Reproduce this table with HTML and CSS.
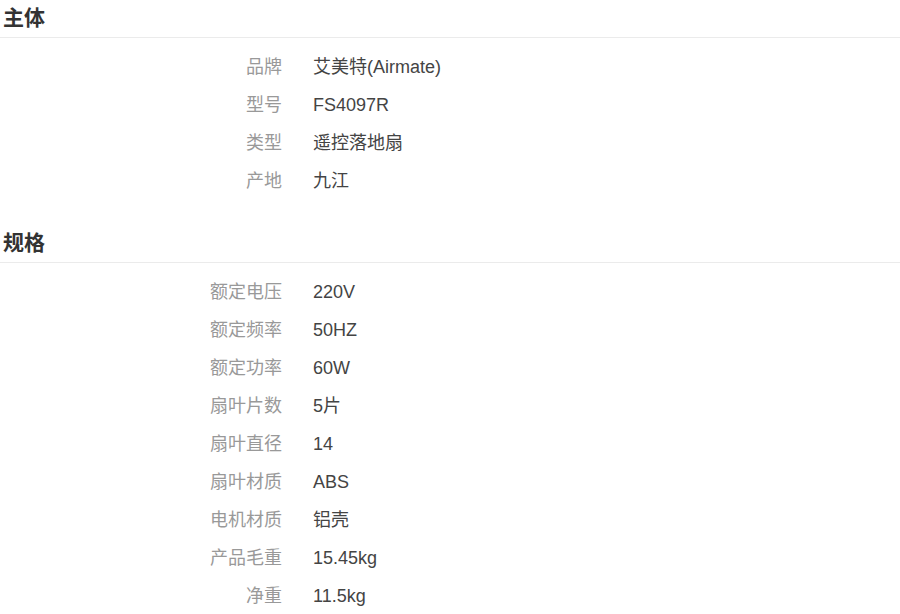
FILE: index.html
```html
<!DOCTYPE html>
<html lang="zh-CN">
<head>
    <meta charset="UTF-8">
    <title>规格参数</title>
    <link rel="stylesheet" href="styles.css">
</head>
<body>
    <section class="spec-group">
        <h2 class="spec-title">主体</h2>
        <dl class="spec-list">
            <dt>品牌</dt><dd>艾美特(Airmate)</dd>
            <dt>型号</dt><dd>FS4097R</dd>
            <dt>类型</dt><dd>遥控落地扇</dd>
            <dt>产地</dt><dd>九江</dd>
        </dl>
    </section>

    <section class="spec-group">
        <h2 class="spec-title">规格</h2>
        <dl class="spec-list">
            <dt>额定电压</dt><dd>220V</dd>
            <dt>额定频率</dt><dd>50HZ</dd>
            <dt>额定功率</dt><dd>60W</dd>
            <dt>扇叶片数</dt><dd>5片</dd>
            <dt>扇叶直径</dt><dd>14</dd>
            <dt>扇叶材质</dt><dd>ABS</dd>
            <dt>电机材质</dt><dd>铝壳</dd>
            <dt>产品毛重</dt><dd>15.45kg</dd>
            <dt>净重</dt><dd>11.5kg</dd>
        </dl>
    </section>
</body>
</html>
```

FILE: styles.css
```css
body {
    margin: 0;
    padding-top: 4px;
    background: #ffffff;
    font-family: "Liberation Sans", "Noto Sans CJK SC", sans-serif;
    color: #333333;
}

.spec-group + .spec-group {
    margin-top: 29px;
}

.spec-title {
    margin: 0;
    padding: 0 0 5px 3px;
    font-size: 21px;
    line-height: 28px;
    font-weight: bold;
    color: #333333;
    border-bottom: 1px solid #ebebeb;
}

.spec-list {
    display: grid;
    grid-template-columns: 282px 1fr;
    column-gap: 31px;
    margin: 0;
    padding-top: 10px;
    font-size: 18px;
    line-height: 38px;
}

.spec-list dt {
    text-align: right;
    color: #999999;
}

.spec-list dd {
    margin: 0;
    color: #444444;
}
```
